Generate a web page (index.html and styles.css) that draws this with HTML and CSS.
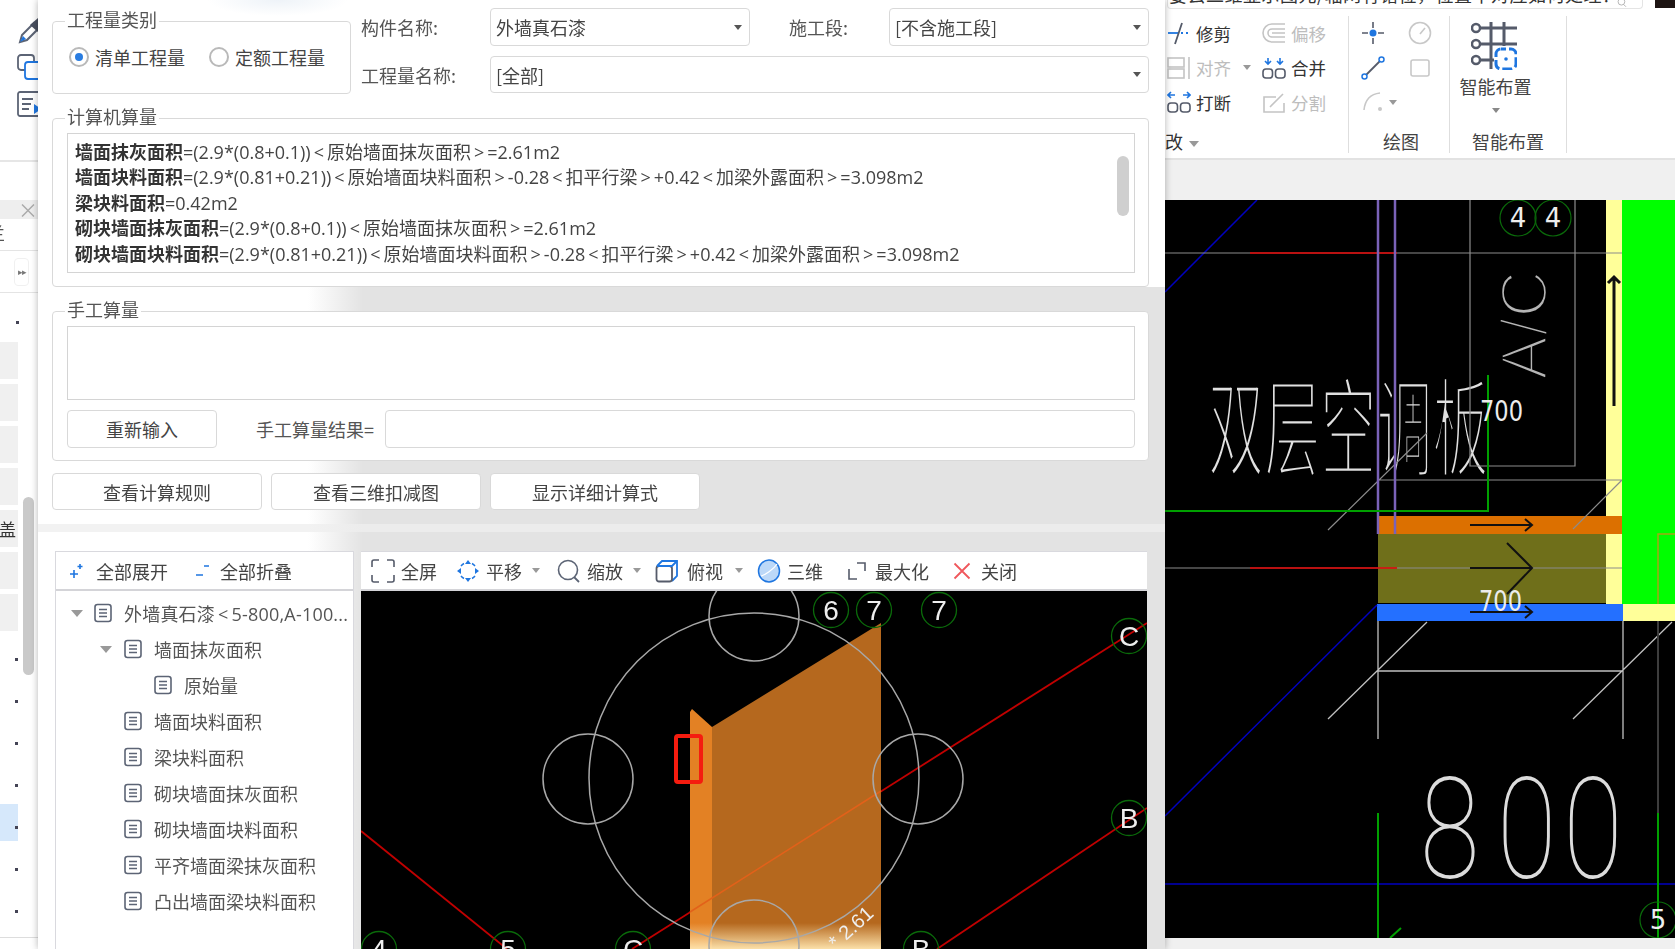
FILE: index.html
```html
<!DOCTYPE html>
<html lang="zh">
<head>
<meta charset="utf-8">
<title>查看工程量计算式</title>
<link rel="stylesheet" href="styles.css">
</head>
<body>
<svg class="sprite" aria-hidden="true">
  <symbol id="doc" viewBox="0 0 18 20"><rect x="1" y="1.5" width="16" height="17" rx="2.5" fill="none" stroke="#5c6475" stroke-width="1.6"/><path d="M5 6.5h8M5 10h8M5 13.5h8" stroke="#5c6475" stroke-width="1.5"/></symbol>
  <symbol id="merge" viewBox="0 0 24 24"><path d="M6 2v6M3 5l3 3 3-3M18 2v6M15 5l3 3 3-3" fill="none" stroke="#1f76e0" stroke-width="1.6"/><rect x="1" y="13" width="9.5" height="9" rx="3" fill="none" stroke="#555b6a" stroke-width="1.6"/><rect x="13.5" y="13" width="9.5" height="9" rx="3" fill="none" stroke="#555b6a" stroke-width="1.6"/></symbol>
  <symbol id="split" viewBox="0 0 24 24"><path d="M1 5h7M4 2L1 5l3 3M16 5h7M20 2l3 3-3 3" fill="none" stroke="#1f76e0" stroke-width="1.6"/><rect x="1" y="13" width="9.5" height="9" rx="3" fill="none" stroke="#555b6a" stroke-width="1.6"/><rect x="13.5" y="13" width="9.5" height="9" rx="3" fill="none" stroke="#555b6a" stroke-width="1.6"/></symbol>
</svg>

<div class="app">
  <aside class="strip">
    <div class="strip-tools">
      <svg class="strip-icon" viewBox="0 0 30 28"><path d="M3 26l2-7L17 7l5 5-12 12z" fill="none" stroke="#5c6475" stroke-width="2"/><path d="M13 9L22 1l7 7-8 8z" fill="#4a5060"/><path d="M3 26l3-6 3 3z" fill="#1f76e0"/></svg>
      <svg class="strip-icon" viewBox="0 0 30 28"><rect x="1" y="2" width="16" height="15" rx="3" fill="none" stroke="#5c6475" stroke-width="1.8"/><rect x="8" y="9" width="18" height="17" rx="3" fill="#fff" stroke="#1f76e0" stroke-width="1.8"/></svg>
      <svg class="strip-icon" viewBox="0 0 30 28"><rect x="1" y="2" width="24" height="24" rx="2" fill="none" stroke="#5c6475" stroke-width="1.8"/><path d="M5 9h11M5 14h9M5 19h7" stroke="#5c6475" stroke-width="1.8"/><path d="M17 14l7 5-7 5z" fill="#1f76e0"/></svg>
    </div>
    <div class="strip-head"><span class="strip-x">×</span></div>
    <div class="strip-tab">兰</div>
    <div class="strip-more"><span class="strip-pill">▸▸</span></div>
    <div class="strip-dot"></div>
    <div class="strip-rows">
      <div class="row-g"></div><div class="row-g"></div><div class="row-g"></div><div class="row-g"></div>
      <div class="row-g">盖</div><div class="row-g"></div><div class="row-g"></div>
      <div class="row-d"><i></i></div><div class="row-d"><i></i></div><div class="row-d"><i></i></div><div class="row-d"><i></i></div>
      <div class="row-d row-sel"><i></i></div><div class="row-d"><i></i></div><div class="row-d"><i></i></div>
    </div>
    <div class="strip-scroll"></div>
    <div class="strip-end"></div>
  </aside>

  <main class="dialog">
    <section class="dlg-top">
      <div class="group group-type">
        <span class="group-label">工程量类别</span>
        <label class="radio"><span class="radio-dot on"></span>清单工程量</label>
        <label class="radio"><span class="radio-dot"></span>定额工程量</label>
      </div>
      <div class="fields">
        <span class="lbl">构件名称:</span>
        <div class="select s-name"><span>外墙真石漆</span><b class="caret"></b></div>
        <span class="lbl lbl-seg">施工段:</span>
        <div class="select s-seg"><span>[不含施工段]</span><b class="caret"></b></div>
        <span class="lbl">工程量名称:</span>
        <div class="select s-qty"><span>[全部]</span><b class="caret"></b></div>
      </div>
    </section>

    <section class="group group-calc">
      <span class="group-label">计算机算量</span>
      <div class="formula">
        <p><b>墙面抹灰面积</b>=(2.9*(0.8+0.1))<i class="op">&lt;</i>原始墙面抹灰面积<i class="op">&gt;</i>=2.61m2</p>
        <p><b>墙面块料面积</b>=(2.9*(0.81+0.21))<i class="op">&lt;</i>原始墙面块料面积<i class="op">&gt;</i>-0.28<i class="op">&lt;</i>扣平行梁<i class="op">&gt;</i>+0.42<i class="op">&lt;</i>加梁外露面积<i class="op">&gt;</i>=3.098m2</p>
        <p><b>梁块料面积</b>=0.42m2</p>
        <p><b>砌块墙面抹灰面积</b>=(2.9*(0.8+0.1))<i class="op">&lt;</i>原始墙面抹灰面积<i class="op">&gt;</i>=2.61m2</p>
        <p><b>砌块墙面块料面积</b>=(2.9*(0.81+0.21))<i class="op">&lt;</i>原始墙面块料面积<i class="op">&gt;</i>-0.28<i class="op">&lt;</i>扣平行梁<i class="op">&gt;</i>+0.42<i class="op">&lt;</i>加梁外露面积<i class="op">&gt;</i>=3.098m2</p>
        <div class="thumb"></div>
      </div>
    </section>

    <section class="dlg-mid">
      <div class="group group-manual">
        <span class="group-label">手工算量</span>
        <div class="manual-area"></div>
        <div class="manual-row">
          <button class="btn btn-retype">重新输入</button>
          <span class="lbl-result">手工算量结果=</span>
          <div class="manual-input"></div>
        </div>
      </div>
      <div class="actions">
        <button class="btn btn-act">查看计算规则</button>
        <button class="btn btn-act">查看三维扣减图</button>
        <button class="btn btn-act">显示详细计算式</button>
      </div>
    </section>

    <div class="sash"></div>

    <section class="dlg-bottom">
      <div class="tree-panel">
        <div class="toolbar tree-bar">
          <span class="tb"><svg class="ic14" viewBox="0 0 14 16"><path d="M4 7v8M0 11h8M10 1v5M7.500 3.500h5" stroke="#1f76e0" stroke-width="1.600" fill="none"/></svg>全部展开</span>
          <span class="tb"><svg class="ic14" viewBox="0 0 14 16"><path d="M0 12h7M8 3h5" stroke="#1f76e0" stroke-width="1.600" fill="none"/></svg>全部折叠</span>
        </div>
        <ul class="tree">
          <li class="node lv0"><b class="tw"></b><svg class="doc"><use href="#doc"/></svg><span class="root-name">外墙真石漆<i class="op">&lt;</i>5-800,A-100...</span></li>
          <li class="node lv1"><b class="tw"></b><svg class="doc"><use href="#doc"/></svg><span>墙面抹灰面积</span></li>
          <li class="node lv2"><svg class="doc"><use href="#doc"/></svg><span>原始量</span></li>
          <li class="node lv1"><svg class="doc"><use href="#doc"/></svg><span>墙面块料面积</span></li>
          <li class="node lv1"><svg class="doc"><use href="#doc"/></svg><span>梁块料面积</span></li>
          <li class="node lv1"><svg class="doc"><use href="#doc"/></svg><span>砌块墙面抹灰面积</span></li>
          <li class="node lv1"><svg class="doc"><use href="#doc"/></svg><span>砌块墙面块料面积</span></li>
          <li class="node lv1"><svg class="doc"><use href="#doc"/></svg><span>平齐墙面梁抹灰面积</span></li>
          <li class="node lv1"><svg class="doc"><use href="#doc"/></svg><span>凸出墙面梁块料面积</span></li>
        </ul>
      </div>
      <div class="view-panel">
        <div class="toolbar view-bar">
          <span class="tb"><svg class="ic24" viewBox="0 0 24 24"><path d="M1 8V3a2 2 0 0 1 2-2h5M16 1h5a2 2 0 0 1 2 2v5M23 16v5a2 2 0 0 1-2 2h-5M8 23H3a2 2 0 0 1-2-2v-5" fill="none" stroke="#555b6a" stroke-width="1.600"/></svg>全屏</span>
          <span class="tb tb-pan"><svg class="ic24" viewBox="0 0 24 24"><path d="M12 1l-3 4h6zM12 23l-3-4h6zM1 12l4-3v6zM23 12l-4-3v6z" fill="#1f76e0"/><path d="M5 7a9 9 0 0 1 3-2.500M19 7a9 9 0 0 0-3-2.500M5 17a9 9 0 0 0 3 2.500M19 17a9 9 0 0 1-3 2.500" fill="none" stroke="#1f76e0" stroke-width="1.500"/></svg>平移<b class="mini"></b></span>
          <span class="tb"><svg class="ic24" viewBox="0 0 24 24"><circle cx="11" cy="11" r="9.500" fill="none" stroke="#5c6475" stroke-width="1.600"/><path d="M17 18l5 5" stroke="#5c6475" stroke-width="1.800"/></svg>缩放<b class="mini"></b></span>
          <span class="tb tb-top"><svg class="ic24" viewBox="0 0 24 24"><path d="M2 7l5-5h15v15l-5 5" fill="none" stroke="#1f76e0" stroke-width="1.800"/><rect x="1.500" y="7" width="15.500" height="15.500" rx="2.500" fill="none" stroke="#555b6a" stroke-width="1.800"/><path d="M2 7h15l5-5" fill="none" stroke="#1f76e0" stroke-width="1.800"/></svg>俯视<b class="mini"></b></span>
          <span class="tb tb-3d"><svg class="ic24" viewBox="0 0 24 24"><ellipse cx="12" cy="12" rx="10.500" ry="11" fill="#bcd8f8" stroke="#1f76e0" stroke-width="1.500"/><path d="M4 17C8 16 17 10 20 5" fill="none" stroke="#fff" stroke-width="1.200"/></svg>三维</span>
          <span class="tb tb-max"><svg class="ic18" viewBox="0 0 18 18"><path d="M1 7v10h8M9 1h8v8" fill="none" stroke="#555b6a" stroke-width="1.600"/></svg>最大化</span>
          <span class="tb tb-close"><svg class="ic18" viewBox="0 0 18 18"><path d="M1.500 1.500l15 15M16.500 1.500l-15 15" stroke="#f0575c" stroke-width="1.800"/></svg>关闭</span>
        </div>
        <svg class="cad cad-view" viewBox="361 591 786 358" preserveAspectRatio="none">
          <defs>
            <linearGradient id="fade" x1="0" y1="0" x2="0" y2="1"><stop offset="0" stop-color="#ffe6b0" stop-opacity="0"/><stop offset="1" stop-color="#ffe6b0" stop-opacity=".95"/></linearGradient>
          </defs>
          <path class="l-red" d="M361 831L507 949"/>
          <path class="l-red" d="M632 949L1147 623"/>
          <path class="l-red" d="M937 949L1147 808"/>
          <path class="f-wall" d="M712 727L881 623V949H712z"/>
          <path class="f-wall2" d="M692 709L712 727V949H690V712z"/>
          <path class="l-orange" d="M690 912L881 791"/>
          <rect class="f-fade" x="690" y="923" width="191" height="26" fill="url(#fade)"/>
          <circle class="l-cir" cx="754" cy="778" r="165"/>
          <circle class="l-cir" cx="588" cy="779" r="45"/>
          <circle class="l-cir" cx="918" cy="779" r="45"/>
          <circle class="l-cir" cx="754" cy="616" r="45"/>
          <circle class="l-cir" cx="754" cy="945" r="45"/>
          <rect class="redbox" x="676" y="736" width="25" height="46" rx="2"/>
          <g class="bub"><circle cx="831" cy="610" r="17.500"/><text x="831" y="620">6</text></g>
          <g class="bub"><circle cx="874" cy="610" r="17.500"/><text x="874" y="620">7</text></g>
          <g class="bub"><circle cx="939" cy="610" r="17.500"/><text x="939" y="620">7</text></g>
          <g class="bub"><circle cx="1129" cy="636" r="17.500"/><text x="1129" y="646">C</text></g>
          <g class="bub"><circle cx="1129" cy="818" r="17.500"/><text x="1129" y="828">B</text></g>
          <g class="bub"><circle cx="379" cy="949" r="17.500"/><text x="379" y="959">4</text></g>
          <g class="bub"><circle cx="508" cy="949" r="17.500"/><text x="508" y="959">5</text></g>
          <g class="bub"><circle cx="633" cy="949" r="17.500"/><text x="633" y="959">C</text></g>
          <g class="bub"><circle cx="921" cy="949" r="17.500"/><text x="921" y="959">B</text></g>
          <text class="dim" transform="translate(836 950) rotate(-42)">* 2.61</text>
        </svg>
      </div>
    </section>
  </main>

  <div class="backdrop">
    <div class="searchrow">
      <div class="search"><span>要丢二维显示图元/轴网有错位，位置不对应如何处理？</span><svg class="search-ic" viewBox="0 0 16 16"><circle cx="7" cy="3" r="6" fill="none" stroke="#aaa" stroke-width="1.500"/><path d="M11 8l4 4" stroke="#aaa" stroke-width="1.500"/></svg></div>
      <div class="avatar"></div>
    </div>
    <div class="ribbon">
      <div class="rgroup rg-edit">
        <div class="rgrid">
          <span class="rc"><svg class="ric" viewBox="0 0 24 24"><path d="M1 12h11" stroke="#1f76e0" stroke-width="1.800"/><path d="M14 12h2M19 12h2" stroke="#1f76e0" stroke-width="1.800"/><path d="M15 2L8 23" stroke="#555b6a" stroke-width="1.800"/></svg>修剪</span>
          <span class="rc off"><svg class="ric" viewBox="0 0 24 24"><path d="M23 3H10a9 9 0 0 0 0 18h13M23 8H10a4 4 0 0 0 0 8h13M23 12H10" fill="none" stroke="#c4c4c4" stroke-width="1.600"/></svg>偏移</span>
          <span class="rc off"><svg class="ric" viewBox="0 0 24 24"><rect x="1" y="2" width="16" height="9" fill="none" stroke="#c4c4c4" stroke-width="1.600"/><rect x="1" y="13" width="16" height="9" fill="none" stroke="#c4c4c4" stroke-width="1.600"/><path d="M22 1v22" stroke="#c4c4c4" stroke-width="1.600"/></svg>对齐<b class="mini"></b></span>
          <span class="rc"><svg class="ric"><use href="#merge"/></svg>合并</span>
          <span class="rc"><svg class="ric"><use href="#split"/></svg>打断</span>
          <span class="rc off"><svg class="ric" viewBox="0 0 24 24"><path d="M14 7H2v15h20v-9" fill="none" stroke="#c4c4c4" stroke-width="1.600"/><path d="M8 17L21 4" stroke="#c4c4c4" stroke-width="1.600"/></svg>分割</span>
        </div>
        <div class="rfoot rfoot-edit">改<b class="mini wide"></b></div>
      </div>
      <div class="rgroup rg-draw">
        <div class="dgrid">
          <svg class="ric" viewBox="0 0 24 24"><path d="M12 1v6M12 17v6M1 12h6M17 12h6" stroke="#555b6a" stroke-width="1.600"/><circle cx="12" cy="12" r="3.500" fill="#1f76e0"/></svg>
          <svg class="ric" viewBox="0 0 24 24"><circle cx="12" cy="12" r="10.500" fill="none" stroke="#c8c8c8" stroke-width="1.600"/><path d="M12 13l5-6" stroke="#c8c8c8" stroke-width="1.600"/></svg>
          <svg class="ric" viewBox="0 0 24 24"><path d="M4 20L20 4" stroke="#555b6a" stroke-width="1.800"/><circle cx="3.500" cy="20.500" r="2.500" fill="#fff" stroke="#1f76e0" stroke-width="1.500"/><circle cx="20.500" cy="3.500" r="2.500" fill="#fff" stroke="#1f76e0" stroke-width="1.500"/></svg>
          <svg class="ric" viewBox="0 0 24 24"><rect x="3" y="4" width="18" height="16" rx="2" fill="none" stroke="#c8c8c8" stroke-width="1.600"/></svg>
          <span class="arcwrap"><svg class="ric" viewBox="0 0 24 24"><path d="M3 20C4 10 10 4 19 3" fill="none" stroke="#c8c8c8" stroke-width="1.600"/><circle cx="19" cy="19" r="2" fill="#c8c8c8"/></svg><b class="mini"></b></span>
        </div>
        <div class="rfoot rfoot-draw">绘图</div>
      </div>
      <div class="rgroup rg-smart">
        <div class="smart">
          <svg class="smart-ic" viewBox="0 0 46 48"><path d="M8 6h38M8 22h38M8 38h15M20 0v47M33 0v24" fill="none" stroke="#555b6a" stroke-width="3"/><circle cx="5" cy="6" r="4" fill="#fff" stroke="#555b6a" stroke-width="2.500"/><circle cx="5" cy="22" r="4" fill="#fff" stroke="#555b6a" stroke-width="2.500"/><circle cx="5" cy="38" r="4" fill="#fff" stroke="#555b6a" stroke-width="2.500"/><rect x="25" y="27" width="20" height="20" rx="5" fill="#fff" stroke="#1f76e0" stroke-width="3" stroke-dasharray="10 3" stroke-dashoffset="5"/><circle cx="35" cy="37" r="1.800" fill="#1f76e0"/></svg>
          <span class="smart-txt">智能布置</span>
          <b class="mini center"></b>
        </div>
        <div class="rfoot">智能布置</div>
      </div>
    </div>
    <div class="rib-gap"></div>
    <svg class="cad cad-plan" viewBox="1165 200 510 738" preserveAspectRatio="none">
      <rect class="f-green" x="1622" y="200" width="53" height="404"/>
      <rect class="f-yellow" x="1606" y="200" width="16" height="404"/>
      <rect class="f-yellow" x="1622" y="604" width="53" height="17"/>
      <rect class="f-orange" x="1378" y="516" width="244" height="18"/>
      <rect class="f-olive" x="1378" y="534" width="228" height="69"/>
      <rect class="f-blue" x="1377" y="604" width="246" height="17"/>
      <path class="l-frame" d="M1658 604V534H1675"/>
      <path class="l-dblue" d="M1165 292L1257 200M1165 816L1377 605M1165 884H1675"/>
      <text class="cad-cn" transform="translate(1208 468) scale(.52 1)">双层空调板</text>
      <text class="cad-ac" transform="translate(1547 380) rotate(-90)">A/C</text>
      <text class="cad-800" transform="translate(1420 878) scale(.77 1)" x="0 100 186" y="0">800</text>
      <path class="l-gray" d="M1165 253H1622M1165 568H1622M1470 200V466H1575V200M1378 480H1622M1328 530L1427 433M1573 529L1622 480"/>
      <path class="l-redthin" d="M1250 253H1397M1250 568H1397"/>
      <path class="l-purple" d="M1378 200V534M1395 200V534"/>
      <path class="l-green" d="M1165 511H1488V375"/>
      <path class="l-gray2" d="M1378 621V739M1623 621V739M1378 671H1623M1328 719L1427 622M1573 719L1672 622"/>
      <path class="l-dim" d="M1658 621V813"/>
      <path class="l-green" d="M1378 813V938M1658 813V938M1390 938L1401 928"/>
      <path class="l-black" d="M1470 525H1532M1525 519L1532 525L1525 531M1470 568H1532M1507 543L1532 568L1507 594M1470 612H1532M1525 606L1532 612L1525 618"/>
      <path class="l-blackup" d="M1614 406V277M1608 283L1614 277L1620 283"/>
      <g class="bubw"><circle cx="1518" cy="218" r="18"/><text x="1518" y="227">4</text></g>
      <g class="bubw"><circle cx="1553" cy="218" r="18"/><text x="1553" y="227">4</text></g>
      <g class="bubw"><circle cx="1658" cy="920" r="18"/><text x="1658" y="929">5</text></g>
      <text class="cad-700" x="1480" y="421" textLength="43" lengthAdjust="spacingAndGlyphs">700</text>
      <text class="cad-700" x="1479" y="611" textLength="43" lengthAdjust="spacingAndGlyphs">700</text>
    </svg>
    <div class="rib-end"></div>
  </div>
</div>
</body>
</html>
```

FILE: styles.css
```css
* { box-sizing: border-box; }
html, body { margin: 0; padding: 0; background: #fff; }
body { width: 1675px; height: 949px; overflow: hidden; font-family: "Noto Sans CJK SC", "Open Sans", sans-serif; font-size: 18px; color: #444; }
.sprite { width: 0; height: 0; position: absolute; }
.app { display: flex; width: 1675px; height: 949px; overflow: hidden; filter: blur(.45px); }

/* left application strip */
.strip { position: relative; flex: 0 0 38px; width: 38px; height: 949px; background: #fff; overflow: hidden; }
.strip-tools { height: 162px; padding: 16px 0 0 17px; border-bottom: 2px solid #e6e6e6; display: flex; flex-direction: column; gap: 9px; }
.strip-icon { width: 30px; height: 28px; flex: none; }
.strip-head { margin-top: 38px; height: 19px; background: #eee; display: flex; justify-content: flex-end; padding-right: 0; align-items: center; }
.strip-x { color: #aaa; font-size: 20px; line-height: 1; }
.strip-tab { height: 32px; border-bottom: 1px solid #e4e4e4; font-size: 17px; line-height: 28px; margin-left: -12px; color: #555; }
.strip-more { height: 42px; border-bottom: 1px solid #e4e4e4; display: flex; align-items: center; padding-left: 14px; }
.strip-pill { width: 15px; height: 28px; border: 1px solid #f0f0f0; border-radius: 4px; font-size: 9px; line-height: 26px; letter-spacing: -1px; color: #777; text-align: center; }
.strip-dot { height: 49px; position: relative; }
.strip-dot::after { content: ""; position: absolute; left: 16px; top: 28px; width: 3px; height: 3px; background: #445; }
.strip-rows { display: flex; flex-direction: column; gap: 5px; }
.row-g { width: 18px; height: 37px; background: #f0f0f0; font-size: 17px; line-height: 37px; text-indent: -1px; color: #333; overflow: hidden; }
.row-d { width: 18px; height: 37px; position: relative; }
.row-d i { position: absolute; left: 15px; top: 22px; width: 3px; height: 3px; background: #445; }
.row-sel { background: #d6e8fb; }
.strip-scroll { position: absolute; left: 23px; top: 497px; width: 11px; height: 178px; border-radius: 6px; background: #c9c9c9; }
.strip-end { position: absolute; left: 0; right: 0; top: 937px; border-top: 1px solid #ddd; }

/* dialog */
.dialog { position: relative; z-index: 2; flex: 0 0 1127px; width: 1127px; height: 949px; background: #fff; box-shadow: 0 0 7px rgba(0,0,0,.3); display: flex; flex-direction: column; }
.dlg-top { display: flex; height: 118px; padding: 8px 16px 0 14px; gap: 10px; background: radial-gradient(ellipse 70px 16px at 240px 0, #eef3f8, transparent); }
.group { position: relative; background: #fff; border: 1px solid #d9d9d9; border-radius: 4px; }
.group-label { position: absolute; left: 12px; top: -15px; line-height: 24px; padding: 0 2px; background: #fff; color: #555; white-space: nowrap; }
.group-type { flex: 0 0 299px; height: 73px; margin-top: 13px; display: flex; align-items: flex-start; padding: 22px 0 0 16px; gap: 24px; }
.radio { display: flex; align-items: center; gap: 6px; height: 26px; white-space: nowrap; }
.radio-dot { width: 20px; height: 20px; border-radius: 50%; border: 2px solid #b9b9b9; background: #fff; position: relative; }
.radio-dot.on::after { content: ""; position: absolute; left: 4px; top: 4px; width: 8px; height: 8px; border-radius: 50%; background: #2a7de1; }
.fields { flex: 1; display: grid; grid-template-columns: 129px 260px 139px 260px; grid-template-rows: 38px 37px; row-gap: 10px; }
.lbl { align-self: center; white-space: nowrap; color: #555; }
.lbl-seg { padding-left: 39px; }
.select { display: flex; align-items: center; justify-content: space-between; border: 1px solid #d9d9d9; border-radius: 4px; padding: 0 7px 0 5px; background: #fff; }
.s-qty { grid-column: 2 / 5; }
.caret { width: 0; height: 0; border: 4px solid transparent; border-top: 5px solid #555; border-bottom: 0; }

.group-calc { flex: none; margin: 0 16px 0 14px; height: 169px; padding: 14px 13px 13px 14px; }
.formula { position: relative; height: 140px; border: 1px solid #d4d4d4; padding: 6px 0 0 7px; overflow: hidden; font-family: "Open Sans", "Noto Sans CJK SC", sans-serif; }
.formula p { margin: 0; height: 25.4px; line-height: 25.4px; white-space: nowrap; font-size: 18px; }
.formula b { font-weight: 700; color: #333; }
.op { font-style: normal; margin: 0 3px; }
.thumb { position: absolute; right: 5px; top: 22px; width: 12px; height: 60px; border-radius: 6px; background: #cfcfcf; }

.dlg-mid { flex: none; height: 237px; padding: 24px 16px 0 14px; background: linear-gradient(90deg, #fff 270px, #e3e3e3 325px); display: flex; flex-direction: column; gap: 12px; }
.group-manual { height: 150px; padding: 14px 13px 0 14px; flex: none; }
.manual-area { height: 74px; border: 1px solid #d4d4d4; }
.manual-row { display: flex; align-items: center; margin-top: 10px; }
.btn { font: inherit; color: #444; background: #fff; border: 1px solid #d9d9d9; border-radius: 4px; padding: 0; }
.btn-retype { width: 150px; height: 38px; }
.lbl-result { margin-left: 39px; width: 129px; white-space: nowrap; color: #555; }
.manual-input { flex: 1; height: 38px; border: 1px solid #d9d9d9; border-radius: 4px; background: #fff; }
.actions { display: flex; gap: 9px; }
.btn-act { width: 210px; height: 37px; }

.sash { flex: none; height: 8px; background: linear-gradient(90deg, #f2f2f2 270px, #ececec 325px); }
.dlg-bottom { flex: 1; min-height: 0; display: flex; padding: 19px 18px 0 17px; gap: 7px; background: linear-gradient(90deg, #fff 270px, #e3e3e3 325px); }
.tree-panel { flex: 0 0 299px; display: flex; flex-direction: column; background: #fff; border: 1px solid #d9d9de; border-bottom: 0; }
.view-panel { flex: 1; display: flex; flex-direction: column; background: #fff; min-width: 0; }
.toolbar { flex: none; height: 40px; display: flex; align-items: center; background: #fff; border-bottom: 2px solid #d4d4d8; white-space: nowrap; }
.tree-bar { padding-left: 14px; gap: 28px; height: 39px; }
.tb + .tb .ic14 { margin-right: 4px; }
.view-bar { padding-left: 10px; gap: 17px; border-top: 1px solid #d9d9de; }
.tb { display: inline-flex; align-items: center; gap: 6px; }
.tb-pan { margin-left: 2px; }
.tb-top { gap: 8px; margin-left: -3px; }
.tb-3d { margin-left: -3px; gap: 6px; }
.tb-max { margin-left: 8px; gap: 7px; }
.tb-close { margin-left: 7px; gap: 8px; }
.ic14 { width: 14px; height: 16px; margin-right: 6px; }
.ic24 { width: 24px; height: 24px; }
.ic18 { width: 18px; height: 18px; margin-right: 2px; }
.mini { width: 0; height: 0; margin-left: 4px; border: 4px solid transparent; border-top: 5px solid #999; border-bottom: 0; }
.tree { list-style: none; margin: 4px 0 0; padding: 0; flex: 1; }
.node { position: relative; display: flex; align-items: center; height: 36px; white-space: nowrap; }
.node span { color: #555; }
.root-name { font-family: "Open Sans", "Noto Sans CJK SC", sans-serif; letter-spacing: .2px; }
.root-name .op { margin: 0 3px; }
.lv0 { padding-left: 38px; }
.lv1 { padding-left: 68px; }
.lv2 { padding-left: 98px; }
.doc { width: 18px; height: 20px; margin-right: 12px; flex: none; }
.tw { position: absolute; width: 0; height: 0; border: 6px solid transparent; border-top: 7px solid #999; border-bottom: 0; }
.lv0 .tw { left: 15px; }
.lv1 .tw { left: 44px; }
.cad { display: block; background: #000; }
.cad-view { flex: 1; width: 100%; min-height: 0; }

/* CAD strokes */
.l-red { stroke: #c00000; stroke-width: 1.800; fill: none; }
.l-orange { stroke: #e2611a; stroke-width: 1.500; fill: none; }
.f-wall { fill: #b5681e; }
.f-wall2 { fill: #e38124; }
.l-cir { fill: none; stroke: #a8a8a8; stroke-width: 1.500; }
.redbox { fill: none; stroke: #f51c0f; stroke-width: 4; }
.bub circle { fill: none; stroke: #0a6a0a; stroke-width: 1.300; }
.bub text { fill: #eee; font: 28px "Liberation Sans", sans-serif; text-anchor: middle; }
.dim { fill: #eee; font: 20px "Liberation Sans", sans-serif; }

/* right backdrop */
.backdrop { flex: 0 0 510px; width: 510px; height: 949px; display: flex; flex-direction: column; background: #f0f0f0; }
.searchrow { flex: none; height: 12px; background: #fff; display: flex; align-items: flex-start; gap: 12px; padding-left: 2px; overflow: hidden; }
.search { position: relative; width: 481px; height: 9px; background: #fff; border: 1px solid #e4e4e4; border-top: 0; border-radius: 0 0 4px 4px; overflow: hidden; }
.search span { position: absolute; left: 1px; top: -18px; line-height: 25px; font-size: 18px; letter-spacing: .5px; color: #333; white-space: nowrap; }
.search-ic { position: absolute; right: 12px; top: 0; width: 16px; height: 9px; }
.avatar { width: 20px; height: 8px; background: #1d1412; }
.ribbon { flex: none; height: 148px; background: #fff; display: flex; padding-top: 4px; border-bottom: 2px solid #e2e2e2; }
.rgroup { display: flex; flex-direction: column; justify-content: space-between; height: 137px; border-right: 1px solid #dedede; }
.rg-edit { width: 184px; padding-left: 2px; }
.rg-draw { width: 101px; }
.rg-smart { width: 117px; }
.rgrid { display: grid; grid-template-columns: 95px 90px; grid-auto-rows: 34.500px; margin-top: 0; }
.rc { display: flex; align-items: center; gap: 5px; white-space: nowrap; color: #333; font-size: 17.500px; }
.rc .mini { margin-left: 7px; }
.rc.off { color: #bdbdbd; }
.ric { width: 24px; height: 24px; flex: none; }
.rfoot { text-align: center; color: #444; height: 24px; line-height: 24px; }
.rfoot-edit { text-align: left; margin-left: -2px; color: #333; }
.rfoot-draw { padding-left: 4px; }
.mini.wide { display: inline-block; border-width: 5px; border-top-width: 6px; border-bottom: 0; margin-left: 6px; vertical-align: middle; }
.dgrid { display: grid; grid-template-columns: 47px 47px; grid-auto-rows: 34.500px; padding-left: 12px; align-items: center; }
.arcwrap { display: flex; align-items: center; grid-column: 1 / 3; }
.smart { display: flex; flex-direction: column; align-items: center; margin-top: 6px; margin-left: -25px; }
.smart-ic { width: 46px; height: 48px; margin-left: -3px; }
.smart-txt { line-height: 24px; margin-top: 4px; color: #444; }
.mini.center { margin: 10px 0 0; border-top-color: #888; }
.rib-gap { flex: none; height: 40px; background: #f0f0f0; }
.cad-plan { flex: none; width: 510px; height: 738px; }
.rib-end { flex: 1; background: #f0f0f0; }

.f-green { fill: #00ff00; }
.f-yellow { fill: #ffff99; }
.f-orange { fill: #dc7000; }
.f-olive { fill: #6f6f1a; }
.f-blue { fill: #2470ff; }
.l-frame { fill: none; stroke: #a7a714; stroke-width: 1.500; }
.l-dblue { fill: none; stroke: #0000c0; stroke-width: 1.500; }
.l-gray { fill: none; stroke: #8c8c8c; stroke-width: 1.200; }
.l-gray2 { fill: none; stroke: #c0c0c0; stroke-width: 1.300; }
.l-redthin { fill: none; stroke: #e00000; stroke-width: 1.500; }
.l-purple { fill: none; stroke: #7a62b8; stroke-width: 2.500; }
.l-green { fill: none; stroke: #00a000; stroke-width: 2; }
.l-dim { fill: none; stroke: #3d3d3d; stroke-width: 2; }
.l-black { fill: none; stroke: #111; stroke-width: 2; }
.l-blackup { fill: none; stroke: #111; stroke-width: 3; }
.bubw circle { fill: none; stroke: #0a6a0a; stroke-width: 1.200; }
.bubw text { fill: #eee; font: 26px "DejaVu Sans", sans-serif; text-anchor: middle; }
.cad-cn { fill: #e0e0e0; stroke: #000; stroke-width: 5; font: 108px "Noto Sans CJK SC", sans-serif; }
.cad-ac { fill: #b5b5b5; stroke: #000; stroke-width: 3.500; font: 66px "Liberation Sans", sans-serif; }
.cad-700 { fill: #ececec; font: 29px "DejaVu Sans", sans-serif; }
.cad-800 { fill: #dcdcdc; font: 100 141px "Roboto", sans-serif; }
```
